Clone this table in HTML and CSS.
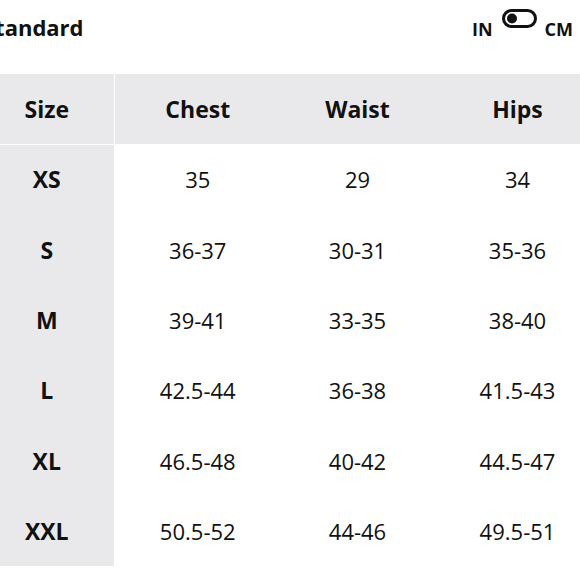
FILE: index.html
```html
<!DOCTYPE html>
<html>
<head>
<meta charset="utf-8">
<link rel="stylesheet" href="styles.css">
</head>
<body>
<div class="page">
  <div class="topbar">
    <h1 class="title">Standard</h1>
    <div class="units"><span class="unit">IN</span><svg class="toggle" width="35" height="19" viewBox="0 0 35 19"><rect x="1.5" y="1.5" width="32" height="16" rx="8" fill="none" stroke="#111" stroke-width="3"/><circle cx="10" cy="9.5" r="5" fill="#111"/></svg><span class="unit">CM</span></div>
  </div>
  <div class="table-wrap">
    <table class="chart">
      <thead>
        <tr><th class="size">Size</th><th>Chest</th><th>Waist</th><th>Hips</th></tr>
      </thead>
      <tbody>
        <tr><th class="size">XS</th><td>35</td><td>29</td><td>34</td></tr>
        <tr><th class="size">S</th><td>36-37</td><td>30-31</td><td>35-36</td></tr>
        <tr><th class="size">M</th><td>39-41</td><td>33-35</td><td>38-40</td></tr>
        <tr><th class="size">L</th><td>42.5-44</td><td>36-38</td><td>41.5-43</td></tr>
        <tr><th class="size">XL</th><td>46.5-48</td><td>40-42</td><td>44.5-47</td></tr>
        <tr><th class="size">XXL</th><td>50.5-52</td><td>44-46</td><td>49.5-51</td></tr>
      </tbody>
    </table>
  </div>
</div>
</body>
</html>
```

FILE: styles.css
```css
html, body {
  margin: 0;
  padding: 0;
  background: #fff;
}
body {
  font-family: "Open Sans", "Noto Sans", sans-serif;
  color: #111;
}
.page {
  width: 580px;
  height: 580px;
  overflow: hidden;
}
.topbar {
  display: flex;
  justify-content: space-between;
  align-items: baseline;
  height: 74px;
  box-sizing: border-box;
  padding: 9px 7px 0 0;
}
.title {
  margin: 0 0 0 -17px;
  font-size: 22px;
  line-height: 30px;
  font-weight: 700;
}
.units {
  font-size: 18px;
  line-height: 30px;
  font-weight: 700;
  white-space: nowrap;
}
.toggle {
  vertical-align: 8px;
  margin: 0 8px 0 9px;
}
.table-wrap {
  margin-left: -20px;
  width: 614px;
}
.chart {
  border-collapse: collapse;
  border-spacing: 0;
  table-layout: fixed;
  width: 614px;
}
.chart th, .chart td {
  height: 70px;
  padding: 0 0 0 7px;
  text-align: center;
  vertical-align: middle;
  box-sizing: border-box;
}
.chart tbody th, .chart tbody td {
  height: 70.4px;
}
.chart thead th {
  background: #e9e9eb;
  font-size: 23px;
  font-weight: 700;
  border-bottom: 1px solid #fff;
}
.chart th.size {
  width: 134px;
  padding: 0;
  background: #e9e9eb;
  border-right: 1px solid #fff;
  font-size: 23px;
  font-weight: 700;
}
.chart td {
  width: 160px;
  font-size: 22px;
  font-weight: 400;
}
```
